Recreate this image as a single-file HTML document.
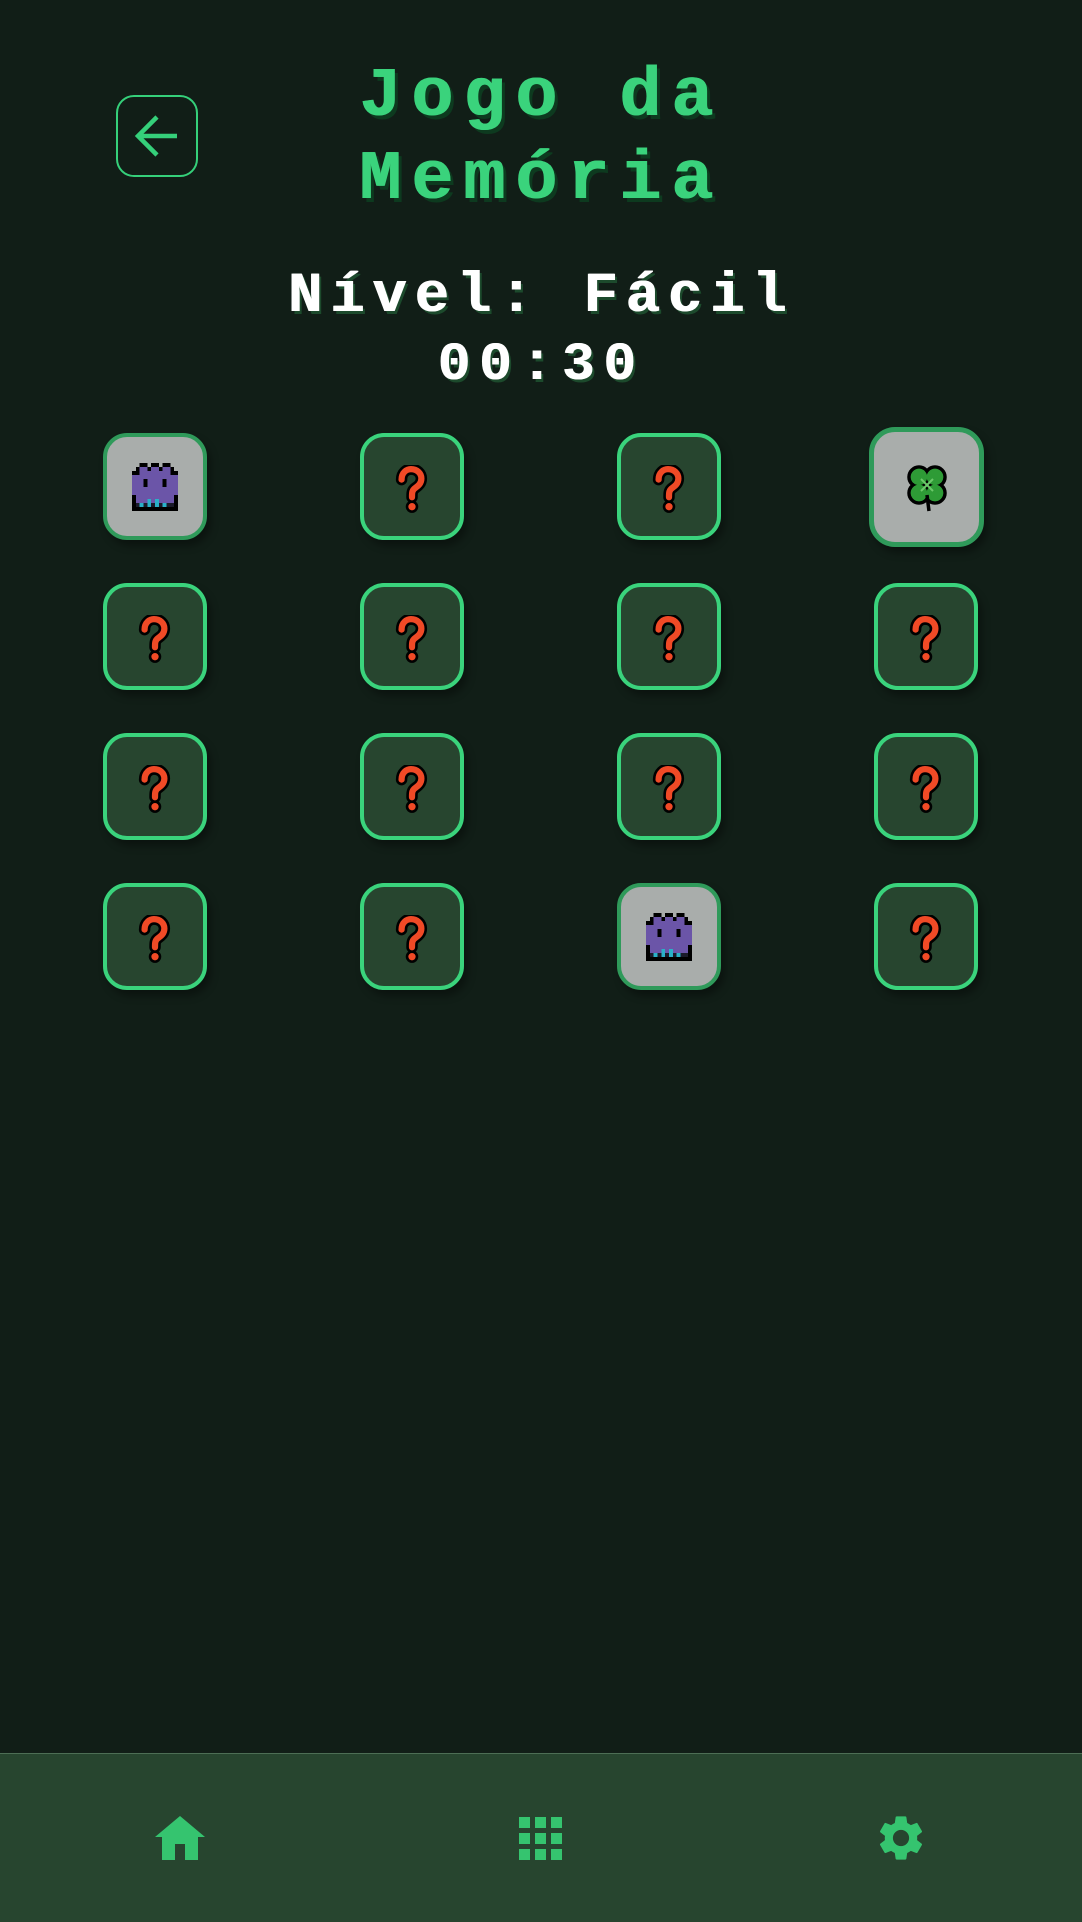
<!DOCTYPE html>
<html><head><meta charset="utf-8"><style>
*{margin:0;padding:0;box-sizing:border-box}
body{width:1082px;height:1922px;background:#111e17;position:relative;overflow:hidden;font-family:"Liberation Mono",monospace}
.back{position:absolute;left:116px;top:95px;width:82px;height:82px;border:2.5px solid #35d07a;border-radius:18px}
.t{position:absolute;left:0;width:1082px;text-align:center;font-weight:bold;white-space:pre}
.title{color:#3ad37c;font-size:70px;letter-spacing:10px;text-shadow:1px 0 0 #3ad37c,4px 4px 0 #0d3a1f}
.w{color:#fff;text-shadow:1px 0 0 #fff,3px 3px 0 #1c4a2c}
.card{position:absolute;width:104px;height:107px;border:4px solid #3ad37c;border-radius:24px;background:#27452f;box-shadow:4px 6px 8px rgba(0,0,0,.35)}
.card svg{position:absolute;left:50%;top:50%;transform:translate(-50%,-50%)}
.card svg.qq{transform:translate(-50%,-44%)}
.f{background:#a9adab;border-color:#2f9a5a}
.nav{position:absolute;left:0;top:1753px;width:1082px;height:169px;background:#27452f;border-top:1.5px solid #4d6e55}
</style></head><body>
<div class="back"><svg width="82" height="82" viewBox="0 0 82 82" style="position:absolute;left:-2.5px;top:-2.5px"><path d="M61 41H24M41 22L22 41L41 60" fill="none" stroke="#35d07a" stroke-width="4.5"/></svg></div>
<div class="t title" style="top:58px;line-height:80px">Jogo da</div>
<div class="t title" style="top:141px;line-height:80px">Memória</div>
<div class="t w" style="top:262px;font-size:57px;letter-spacing:8px;line-height:70px">Nível: Fácil</div>
<div class="t w" style="top:333px;font-size:54px;letter-spacing:9px;line-height:66px">00:30</div>

<svg width="0" height="0" style="position:absolute"><defs>
<g id="q"><path d="M6 14C6 7 11 4 15 4C21 4 25 8 25 13C25 19 20 21 18 23C16 25 16 27 16 31" fill="none" stroke="#000" stroke-width="11" stroke-linecap="round"/><circle cx="16" cy="40" r="6" fill="#000"/><path d="M6 14C6 7 11 4 15 4C21 4 25 8 25 13C25 19 20 21 18 23C16 25 16 27 16 31" fill="none" stroke="#f04a26" stroke-width="6" stroke-linecap="round"/><circle cx="16" cy="40" r="3.5" fill="#f04a26"/></g>
<g id="m"><path d="M4 1h2v1h1v-1h2v1h1v-1h2v1h1v1h2v6h-1v5h-12v-5h-1v-6h2v-1h1z" fill="#000"/><path d="M5 2h1v1h1v-1h2v1h1v-1h2v2h2v5h-1v2h-10v-2h-1v-5h2v-2h1z" fill="#6b55a8"/><rect x="5" y="5" width="1" height="2" fill="#000"/><rect x="10" y="5" width="1" height="2" fill="#000"/><path d="M3 11h10v1h-10z" fill="#1b1b2a"/><rect x="4" y="11" width="1" height="1" fill="#2ab0c8"/><rect x="6" y="10" width="1" height="2" fill="#2ab0c8"/><rect x="8" y="10" width="1" height="2" fill="#2ab0c8"/><rect x="10" y="11" width="1" height="1" fill="#2ab0c8"/></g>
</defs></svg>

<div class="card f" style="left:103px;top:433px"><svg width="46" height="48" viewBox="2 1 12 12" preserveAspectRatio="none" shape-rendering="crispEdges"><use href="#m"/></svg></div>
<div class="card" style="left:360px;top:433px"><svg class="qq" width="34" height="50" viewBox="0 0 32 48"><use href="#q"/></svg></div>
<div class="card" style="left:617px;top:433px"><svg class="qq" width="34" height="50" viewBox="0 0 32 48"><use href="#q"/></svg></div>
<div class="card f" style="left:869px;top:427px;width:115px;height:120px;border-width:5px;border-radius:26px"><svg width="54" height="56" viewBox="0 0 54 56"><g stroke="#000" stroke-width="3.5" fill="#2e9b36"><circle cx="19" cy="18" r="10"/><circle cx="35" cy="18" r="10"/><circle cx="19" cy="34" r="10"/><circle cx="35" cy="34" r="10"/></g><g fill="#2e9b36"><circle cx="19" cy="18" r="8.2"/><circle cx="35" cy="18" r="8.2"/><circle cx="19" cy="34" r="8.2"/><circle cx="35" cy="34" r="8.2"/></g><path d="M27 26L21 20M27 26L33 20M27 26L21 32M27 26L33 32" stroke="#6cc86a" stroke-width="2"/><path d="M27 36L29 52" stroke="#000" stroke-width="3.5"/></svg></div>

<div class="card" style="left:103px;top:583px"><svg class="qq" width="34" height="50" viewBox="0 0 32 48"><use href="#q"/></svg></div>
<div class="card" style="left:360px;top:583px"><svg class="qq" width="34" height="50" viewBox="0 0 32 48"><use href="#q"/></svg></div>
<div class="card" style="left:617px;top:583px"><svg class="qq" width="34" height="50" viewBox="0 0 32 48"><use href="#q"/></svg></div>
<div class="card" style="left:874px;top:583px"><svg class="qq" width="34" height="50" viewBox="0 0 32 48"><use href="#q"/></svg></div>

<div class="card" style="left:103px;top:733px"><svg class="qq" width="34" height="50" viewBox="0 0 32 48"><use href="#q"/></svg></div>
<div class="card" style="left:360px;top:733px"><svg class="qq" width="34" height="50" viewBox="0 0 32 48"><use href="#q"/></svg></div>
<div class="card" style="left:617px;top:733px"><svg class="qq" width="34" height="50" viewBox="0 0 32 48"><use href="#q"/></svg></div>
<div class="card" style="left:874px;top:733px"><svg class="qq" width="34" height="50" viewBox="0 0 32 48"><use href="#q"/></svg></div>

<div class="card" style="left:103px;top:883px"><svg class="qq" width="34" height="50" viewBox="0 0 32 48"><use href="#q"/></svg></div>
<div class="card" style="left:360px;top:883px"><svg class="qq" width="34" height="50" viewBox="0 0 32 48"><use href="#q"/></svg></div>
<div class="card f" style="left:617px;top:883px"><svg width="46" height="48" viewBox="2 1 12 12" preserveAspectRatio="none" shape-rendering="crispEdges"><use href="#m"/></svg></div>
<div class="card" style="left:874px;top:883px"><svg class="qq" width="34" height="50" viewBox="0 0 32 48"><use href="#q"/></svg></div>

<div class="nav">
<svg style="position:absolute;left:153px;top:60px" width="54" height="48" viewBox="0 0 54 48"><path d="M27 2L52 23H45V46H32V30H22V46H9V23H2Z" fill="#35c46f"/></svg>
<svg style="position:absolute;left:518px;top:62px" width="46" height="46" viewBox="0 0 46 46" fill="#35c46f"><rect x="1" y="1" width="11" height="11"/><rect x="17" y="1" width="11" height="11"/><rect x="33" y="1" width="11" height="11"/><rect x="1" y="17" width="11" height="11"/><rect x="17" y="17" width="11" height="11"/><rect x="33" y="17" width="11" height="11"/><rect x="1" y="33" width="11" height="11"/><rect x="17" y="33" width="11" height="11"/><rect x="33" y="33" width="11" height="11"/></svg>
<svg style="position:absolute;left:874px;top:57px" width="54" height="54" viewBox="0 0 24 24"><path fill="#35c46f" fill-rule="evenodd" d="M19.14 12.94c.04-.3.06-.61.06-.94s-.02-.64-.07-.94l2.030-1.58a.49.49 0 0 0 .12-.61l-1.92-3.32a.49.49 0 0 0-.59-.22l-2.39.96c-.5-.38-1.030-.7-1.62-.94l-.36-2.54a.48.48 0 0 0-.48-.41h-3.84c-.24 0-.43.17-.47.41l-.36 2.54c-.59.24-1.13.57-1.62.94l-2.39-.96a.48.48 0 0 0-.59.22L2.74 8.87c-.12.21-.08.47.12.61l2.030 1.58c-.05.3-.09.63-.09.94s.02.64.07.94l-2.030 1.58a.49.49 0 0 0-.12.61l1.92 3.32c.12.22.37.29.59.22l2.39-.96c.5.38 1.030.7 1.62.94l.36 2.54c.05.24.24.41.48.41h3.84c.24 0 .44-.17.47-.41l.36-2.54c.59-.24 1.13-.56 1.62-.94l2.39.96c.22.08.47 0 .59-.22l1.92-3.32c.12-.22.07-.47-.12-.61l-2.010-1.58zM12 15.6A3.6 3.6 0 1 1 12 8.4a3.6 3.6 0 0 1 0 7.2z"/></svg>
</div>
</body></html>
